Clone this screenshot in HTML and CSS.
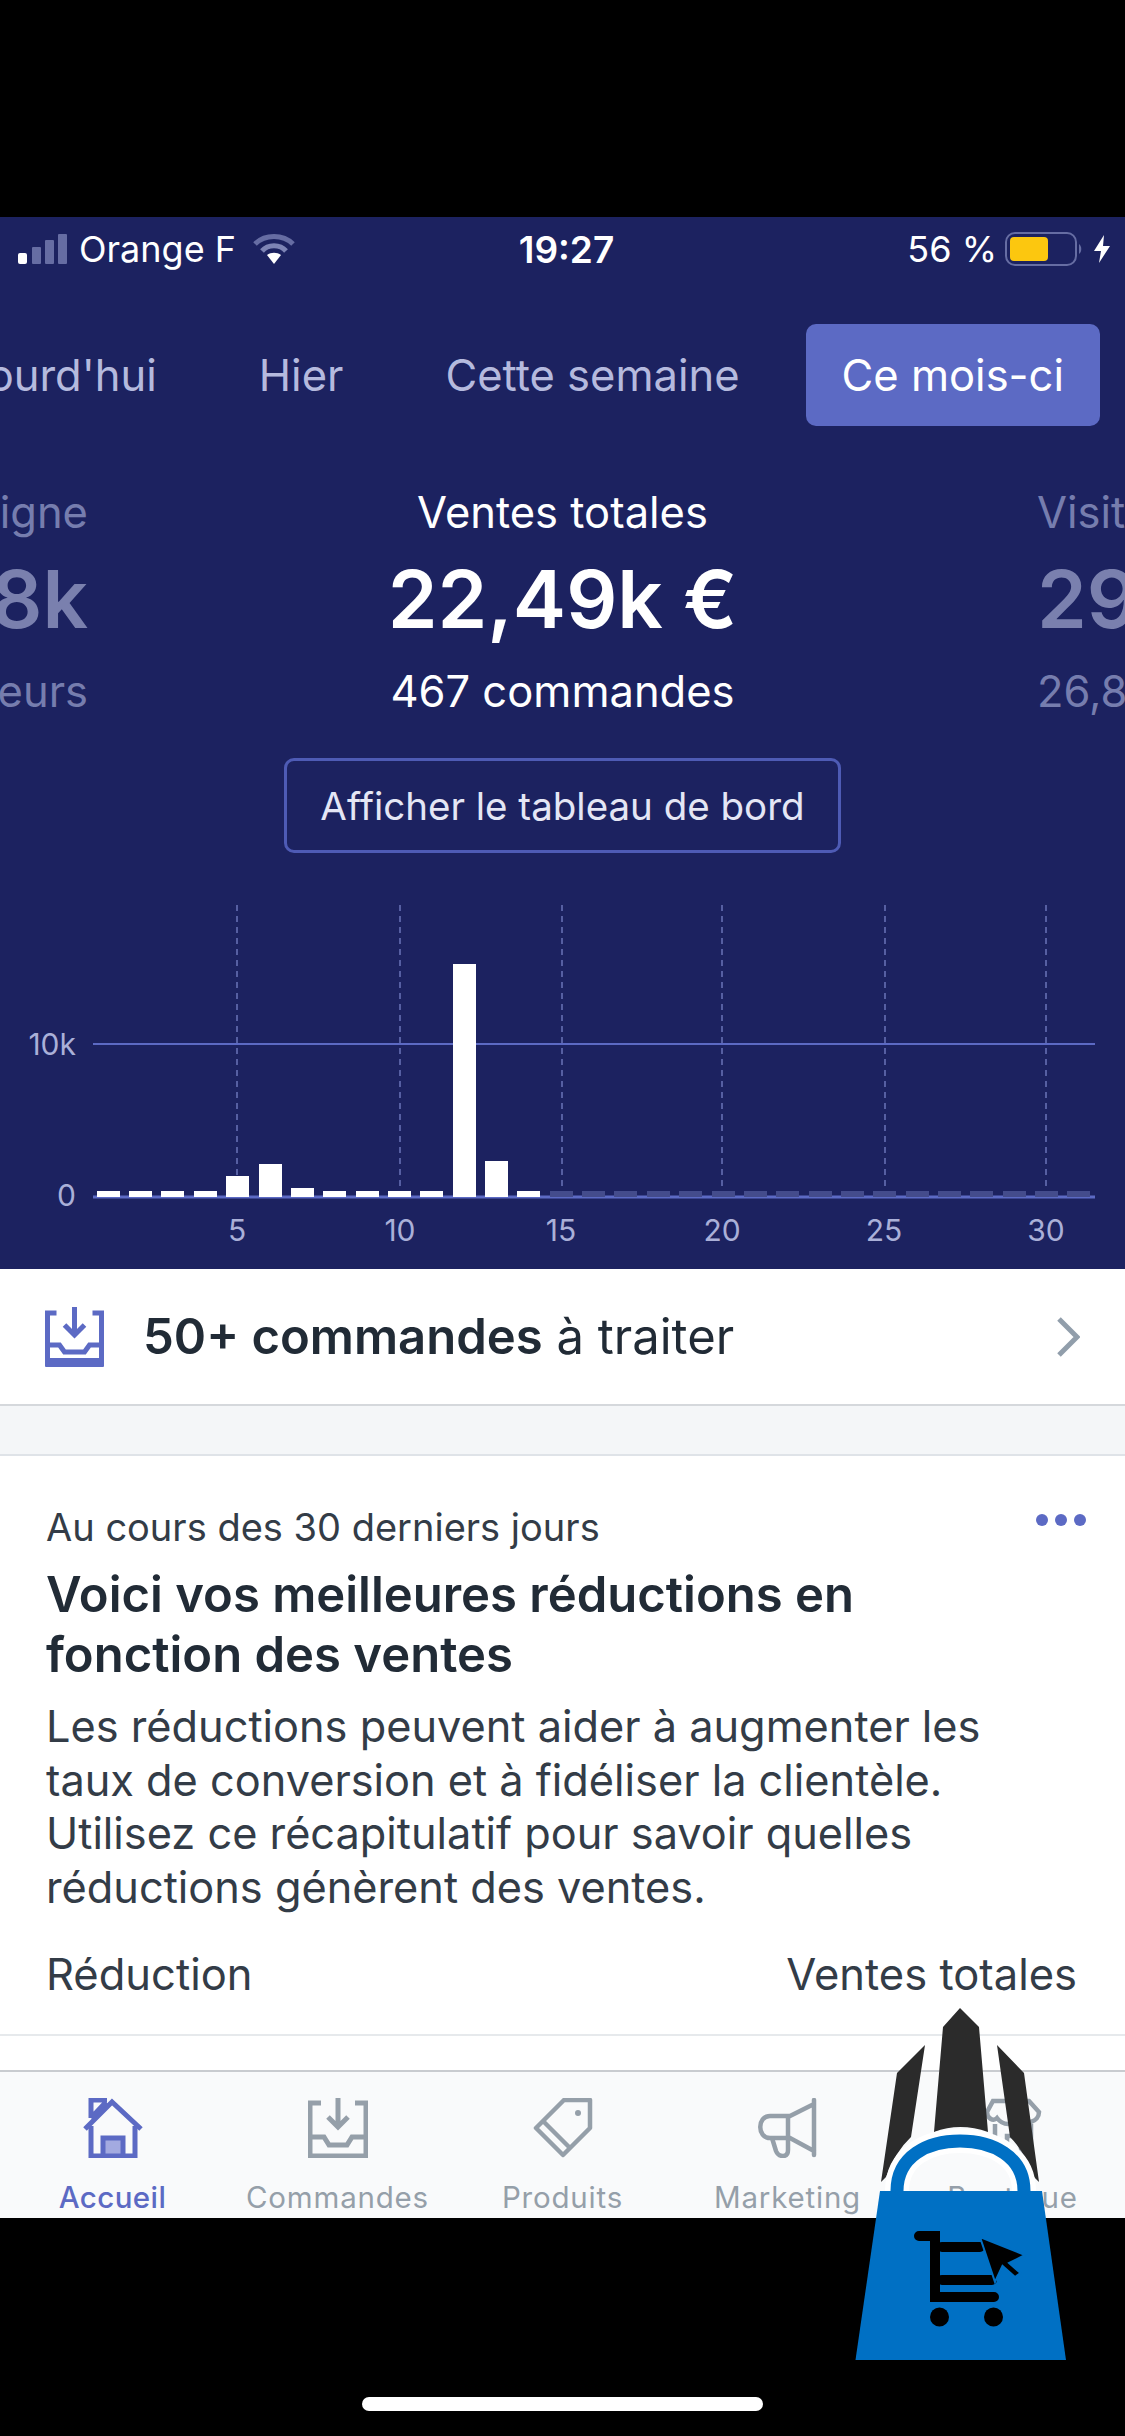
FILE: index.html
```html
<!DOCTYPE html>
<html lang="fr">

<head>
    <meta charset="utf-8">
    <meta name="viewport" content="width=device-width, initial-scale=1.0">
    <title>Accueil</title>
    <link rel="stylesheet" href="styles.css">
</head>

<body>
    <div class="shot">
        <div class="black-top"></div>

        <div class="screen">
            <section class="dark">
                <div class="status">
                    <div class="status-left">
                        <svg class="signal" viewBox="0 0 50 30" width="50" height="30">
                            <rect x="0" y="19" width="9" height="11" rx="2" fill="#fff" />
                            <rect x="14" y="13" width="9" height="17" rx="1" fill="#666da3" />
                            <rect x="27" y="6" width="9" height="24" rx="1" fill="#666da3" />
                            <rect x="40" y="0" width="9" height="30" rx="1" fill="#666da3" />
                        </svg>
                        <span>Orange F</span>
                        <svg class="wifi" viewBox="0 0 42 30" width="42" height="30">
                            <path d="M2 10 C12 0 30 0 40 10" fill="none" stroke="#666da3" stroke-width="5" />
                            <path d="M9 17 C15 10 27 10 33 17" fill="none" stroke="#7d84b5" stroke-width="5" />
                            <path d="M14 21 C18 18 24 18 28 21 L21 30 Z" fill="#fff" />
                        </svg>
                    </div>
                    <div class="status-time">19:27</div>
                    <div class="status-right">
                        <span class="status-pct">56 %</span>
                        <svg class="battery" viewBox="0 0 78 34" width="78" height="34">
                            <rect x="1" y="1" width="70" height="32" rx="9" fill="none" stroke="#666da3" stroke-width="2" />
                            <rect x="5" y="5" width="38" height="24" rx="4" fill="#fcc70f" />
                            <path d="M74 12 C77 14 77 20 74 22 Z" fill="#666da3" />
                        </svg>
                        <svg class="bolt" viewBox="0 0 16 28" width="16" height="28">
                            <path d="M10 0 L0 16 L7 16 L5 28 L16 11 L9 11 Z" fill="#fff" />
                        </svg>
                    </div>
                </div>

                <nav class="tabs">
                    <a class="tab">Aujourd'hui</a>
                    <a class="tab">Hier</a>
                    <a class="tab">Cette semaine</a>
                    <a class="tab tab-active">Ce mois-ci</a>
                </nav>

                <div class="metrics">
                    <div class="metric metric-left">
                        <div class="metric-title">En ligne</div>
                        <div class="metric-value">1,8k</div>
                        <div class="metric-sub">visiteurs</div>
                    </div>
                    <div class="metric metric-main">
                        <div class="metric-title">Ventes totales</div>
                        <div class="metric-value">22,49k €</div>
                        <div class="metric-sub">467 commandes</div>
                    </div>
                    <div class="metric metric-right">
                        <div class="metric-title">Visites</div>
                        <div class="metric-value">29,8k</div>
                        <div class="metric-sub">26,8k visiteurs</div>
                    </div>
                </div>

                <div class="dashboard-row">
                    <a class="dashboard-btn">Afficher le tableau de bord</a>
                </div>

                <svg class="chart" viewBox="0 880 1125 389" width="1125" height="389">
                    <g class="chart-dash">
                        <line x1="237" y1="905" x2="237" y2="1197" />
                        <line x1="400" y1="905" x2="400" y2="1197" />
                        <line x1="562" y1="905" x2="562" y2="1197" />
                        <line x1="722" y1="905" x2="722" y2="1197" />
                        <line x1="885" y1="905" x2="885" y2="1197" />
                        <line x1="1046" y1="905" x2="1046" y2="1197" />
                    </g>
                    <line class="chart-line" x1="93" y1="1044" x2="1095" y2="1044" />
                    <line class="chart-base" x1="93" y1="1197" x2="1095" y2="1197" />

                    <g class="bars">
                        <rect x="97" y="1191" width="23" height="6" />
                        <rect x="129" y="1191" width="23" height="6" />
                        <rect x="161" y="1191" width="23" height="6" />
                        <rect x="194" y="1191" width="23" height="6" />
                        <rect x="226" y="1176" width="23" height="21" />
                        <rect x="259" y="1164" width="23" height="33" />
                        <rect x="291" y="1188" width="23" height="9" />
                        <rect x="323" y="1191" width="23" height="6" />
                        <rect x="356" y="1191" width="23" height="6" />
                        <rect x="388" y="1191" width="23" height="6" />
                        <rect x="420" y="1191" width="23" height="6" />
                        <rect x="453" y="964" width="23" height="233" />
                        <rect x="485" y="1161" width="23" height="36" />
                        <rect x="517" y="1191" width="23" height="6" />
                    </g>
                    <g class="bars-future">
                        <rect x="550" y="1191" width="23" height="6" />
                        <rect x="582" y="1191" width="23" height="6" />
                        <rect x="614" y="1191" width="23" height="6" />
                        <rect x="647" y="1191" width="23" height="6" />
                        <rect x="679" y="1191" width="23" height="6" />
                        <rect x="712" y="1191" width="23" height="6" />
                        <rect x="744" y="1191" width="23" height="6" />
                        <rect x="776" y="1191" width="23" height="6" />
                        <rect x="809" y="1191" width="23" height="6" />
                        <rect x="841" y="1191" width="23" height="6" />
                        <rect x="873" y="1191" width="23" height="6" />
                        <rect x="906" y="1191" width="23" height="6" />
                        <rect x="938" y="1191" width="23" height="6" />
                        <rect x="970" y="1191" width="23" height="6" />
                        <rect x="1003" y="1191" width="23" height="6" />
                        <rect x="1035" y="1191" width="23" height="6" />
                        <rect x="1067" y="1191" width="23" height="6" />
                    </g>

                    <text class="chart-y" x="76" y="1055">10k</text>
                    <text class="chart-y" x="76" y="1206">0</text>
                    <text class="chart-x" x="237" y="1241">5</text>
                    <text class="chart-x" x="400" y="1241">10</text>
                    <text class="chart-x" x="561" y="1241">15</text>
                    <text class="chart-x" x="722" y="1241">20</text>
                    <text class="chart-x" x="884" y="1241">25</text>
                    <text class="chart-x" x="1046" y="1241">30</text>
                </svg>
            </section>

            <a class="todo">
                <svg class="todo-icon" viewBox="0 0 60 60" width="61" height="60">
                    <path d="M12 6 H3 V57 H57 V6 H48" fill="none" stroke="#5c6ac4" stroke-width="5" />
                    <path d="M3 38 H15 L20 45 H40 L45 38 H57" fill="none" stroke="#5c6ac4" stroke-width="5" />
                    <rect x="1" y="51" width="58" height="9" fill="#5c6ac4" />
                    <path d="M30 0 V26 M20 18 L30 28 L40 18" fill="none" stroke="#5c6ac4" stroke-width="5" />
                </svg>
                <span class="todo-text"><b>50+ commandes</b> à traiter</span>
                <svg class="chevron" viewBox="0 0 24 40" width="24" height="40">
                    <path d="M3 2 L21 20 L3 38" fill="none" stroke="#919eab" stroke-width="5" />
                </svg>
            </a>

            <div class="gap"></div>

            <section class="card">
                <div class="card-top">
                    <p class="card-kicker">Au cours des 30 derniers jours</p>
                    <div class="dots"><i></i><i></i><i></i></div>
                </div>
                <h2 class="card-title">Voici vos meilleures réductions en fonction des ventes</h2>
                <p class="card-body">Les réductions peuvent aider à augmenter les taux de conversion et à fidéliser la clientèle. Utilisez ce récapitulatif pour savoir quelles réductions génèrent des ventes.</p>
                <div class="card-head">
                    <span>Réduction</span>
                    <span>Ventes totales</span>
                </div>
            </section>

            <div class="card-rest"></div>

            <nav class="tabbar">
                <a class="tabbar-item tabbar-active">
                    <svg viewBox="0 0 60 60" width="60" height="60">
                        <path d="M2 31 L29 4 L58 31" fill="none" stroke="#5c6ac4" stroke-width="5" />
                        <path d="M8 28 V58 H52 V28" fill="none" stroke="#5c6ac4" stroke-width="5" />
                        <path d="M8 20 V2 H24 M8 20 L23 4" fill="none" stroke="#5c6ac4" stroke-width="5" />
                        <rect x="20" y="40" width="20" height="18" fill="#a3aae0" stroke="#5c6ac4" stroke-width="5" />
                    </svg>
                    <span>Accueil</span>
                </a>
                <a class="tabbar-item">
                    <svg viewBox="0 0 60 60" width="60" height="60">
                        <path d="M13 5 H2 V58 H58 V5 H47" fill="none" stroke="#959fa9" stroke-width="5" />
                        <path d="M2 39 H16 L21 47 H39 L44 39 H58" fill="none" stroke="#959fa9" stroke-width="5" />
                        <path d="M30 0 V28 M20 19 L30 29 L40 19" fill="none" stroke="#959fa9" stroke-width="5" />
                    </svg>
                    <span>Commandes</span>
                </a>
                <a class="tabbar-item">
                    <svg viewBox="0 0 60 60" width="60" height="60">
                        <path d="M31 2 H57 V30 L30 57 L3 30 Z" fill="none" stroke="#959fa9" stroke-width="4.5" stroke-linejoin="round" />
                        <path d="M10 23 L37 50" fill="none" stroke="#959fa9" stroke-width="4.5" />
                        <circle cx="45" cy="15" r="3" fill="#959fa9" />
                    </svg>
                    <span>Produits</span>
                </a>
                <a class="tabbar-item">
                    <svg viewBox="0 0 60 60" width="60" height="60">
                        <path d="M56 2 V57 M56 6 L32 18 H12 C-1 18 -1 40 12 40 H32 L56 53" fill="none" stroke="#959fa9" stroke-width="4.5" stroke-linecap="round" />
                        <path d="M30 18 V40" fill="none" stroke="#959fa9" stroke-width="4.5" />
                        <path d="M14 40 L18 53 Q20 58 25 58 Q30 58 30 52 V40" fill="none" stroke="#959fa9" stroke-width="4.5" />
                    </svg>
                    <span>Marketing</span>
                </a>
                <a class="tabbar-item">
                    <svg viewBox="0 0 60 60" width="60" height="60">
                        <path d="M10 3 H46 L56 14 C56 24 42 28 36 20 C30 28 20 28 14 20 C10 24 4 20 4 14 Z" fill="none" stroke="#959fa9" stroke-width="4.5" />
                        <path d="M12 26 V56 H48 V26 M24 56 V38 H38 V56" fill="none" stroke="#959fa9" stroke-width="4.5" />
                    </svg>
                    <span>Boutique</span>
                </a>
            </nav>
        </div>

        <div class="black-bottom">
            <div class="home-bar"></div>
        </div>

        <svg class="logo" viewBox="0 0 565 400" width="565" height="400">
            <path class="logo-spike" d="M400 28 L419 47 L428 152 Q400 142 374 152 L383 47 Z" />
            <path class="logo-spike" d="M365 65 L337 93 L321 202 L326 197 Q335 172 351 157 Z" />
            <path class="logo-spike" d="M437 65 L464 93 L479 202 L474 197 Q465 172 450 157 Z" />
            <path class="logo-halo" d="M337 211 C337 176 368 161 400 161 C432 161 464 176 464 211" />
            <path class="logo-handle" d="M337 211 C337 176 368 161 400 161 C432 161 464 176 464 211" />
            <path class="logo-bag" d="M320 211 H482 L506 380 H295.5 Z" />
            <path class="logo-cart" d="M359 256 H375 V317 H434 M382 267 H420 M382 300 H432" />
            <circle cx="379.5" cy="337" r="9.5" />
            <circle cx="433.5" cy="337" r="9.5" />
            <path class="logo-cursor" d="M420 257 L465 275 L449 283 L460.5 293 L455 297 L442.5 286 L435 302 Z" />
        </svg>
    </div>
</body>

</html>
```

FILE: styles.css
```css
* {
    box-sizing: border-box;
}

body {
    margin: 0;
    background: #000;
    font-family: Inter, "Noto Sans", "Liberation Sans", sans-serif;
}

.shot {
    position: relative;
    width: 1125px;
    height: 2436px;
    overflow: hidden;
    display: flex;
    flex-direction: column;
}

.black-top {
    height: 217px;
    flex: none;
}

.screen {
    height: 2001px;
    flex: none;
    display: flex;
    flex-direction: column;
    overflow: hidden;
    background: #fff;
}

.black-bottom {
    flex: 1;
    display: flex;
    justify-content: center;
    align-items: flex-end;
    padding-bottom: 25px;
}

.home-bar {
    width: 401px;
    height: 14px;
    border-radius: 7px;
    background: #fff;
}

/* dark header */
.dark {
    height: 1052px;
    flex: none;
    background: #1c2260;
    color: #fff;
    overflow: hidden;
}

.status {
    height: 64px;
    display: grid;
    grid-template-columns: 1fr auto 1fr;
    align-items: center;
    font-size: 36px;
}

.status-left {
    display: flex;
    align-items: center;
    padding-left: 18px;
    gap: 11px;
}

.wifi {
    margin-left: 6px;
}

.status-time {
    font-size: 37px;
    font-weight: 600;
    padding-left: 8px;
}

.status-right {
    display: flex;
    align-items: center;
    justify-content: flex-end;
    padding-right: 15px;
    gap: 11px;
}

.status-pct {
    margin-right: -3px;
}

.tabs {
    margin-top: 43px;
    display: flex;
    justify-content: flex-end;
    gap: 30px;
    padding-right: 25px;
}

.tab {
    flex: none;
    height: 102px;
    padding: 0 36px;
    border-radius: 10px;
    display: flex;
    align-items: center;
    font-size: 43.5px;
    color: #b5bade;
    white-space: nowrap;
}

.tab-active {
    background: #5c6ac4;
    color: #fff;
}

.metrics {
    margin-top: 61px;
    display: grid;
    grid-template-columns: 88px 1fr 88px;
}

.metric {
    display: flex;
    flex-direction: column;
    white-space: nowrap;
    color: #7a80ae;
}

.metric-left {
    align-items: flex-end;
}

.metric-main {
    align-items: center;
    color: #fff;
}

.metric-title,
.metric-sub {
    font-size: 43.5px;
    line-height: 50px;
}

.metric-value {
    margin-top: 12px;
    margin-bottom: 17px;
    font-size: 80px;
    line-height: 100px;
    font-weight: 600;
}

.metric-left .metric-title,
.metric-left .metric-sub,
.metric-right .metric-title,
.metric-right .metric-sub {
    color: #767dae;
}

.dashboard-row {
    margin-top: 42px;
    display: flex;
    justify-content: center;
}

.dashboard-btn {
    width: 557px;
    height: 95px;
    border: 3px solid #4e5bb5;
    border-radius: 10px;
    display: flex;
    align-items: center;
    justify-content: center;
    font-size: 38.5px;
    color: #e4e6f5;
}

/* chart */
.chart {
    display: block;
    margin-top: 27px;
}

.chart-dash line {
    stroke: #6a74b8;
    stroke-width: 1.5;
    stroke-dasharray: 6 5;
}

.chart-line {
    stroke: #5c6ac4;
    stroke-width: 2;
}

.chart-base {
    stroke: #5c6ac4;
    stroke-width: 3;
}

.bars rect {
    fill: #fff;
}

.bars-future rect {
    fill: #444c8c;
}

.chart-y,
.chart-x {
    font-size: 30px;
    fill: #aab0d8;
}

.chart-y {
    text-anchor: end;
}

.chart-x {
    text-anchor: middle;
}

/* orders row */
.todo {
    height: 137px;
    flex: none;
    display: flex;
    align-items: center;
    padding: 0 45px 0 44px;
    background: #fff;
    border-bottom: 2px solid #d5d8dc;
    color: #212b36;
}

.todo-text {
    flex: 1;
    margin-left: 38px;
    font-size: 49px;
}

.todo-text b {
    font-weight: 600;
}

.gap {
    height: 50px;
    flex: none;
    background: #f4f6f8;
    border-bottom: 2px solid #dfe3e8;
}

/* discounts card */
.card {
    flex: none;
    padding: 46px 48px 0 46px;
    color: #212b36;
    background: #fff;
}

.card-top {
    display: flex;
    justify-content: space-between;
    align-items: center;
}

.card-kicker {
    margin: 0;
    font-size: 38px;
    line-height: 50px;
    color: #333c47;
}

.dots {
    display: flex;
    gap: 7px;
    margin-top: -14px;
    margin-right: -9px;
}

.dots i {
    width: 12px;
    height: 12px;
    border-radius: 50%;
    background: #5c6ac4;
}

.card-title {
    margin: 13px 0 0;
    max-width: 900px;
    font-size: 49px;
    line-height: 60px;
    font-weight: 600;
}

.card-body {
    margin: 15px 0 0;
    max-width: 1000px;
    font-size: 43.3px;
    line-height: 53.5px;
    color: #333c47;
}

.card-head {
    margin-top: 33px;
    display: flex;
    justify-content: space-between;
    font-size: 43.5px;
    line-height: 54px;
    color: #333c47;
}

.card-rest {
    flex: 1;
    background: #fff;
    border-top: 2px solid #e6e9ec;
    margin-top: 33px;
}

/* bottom tabs */
.tabbar {
    height: 148px;
    flex: none;
    display: grid;
    grid-template-columns: repeat(5, 1fr);
    background: #f9fafb;
    border-top: 2px solid #c9ccd0;
}

.tabbar-item {
    display: flex;
    flex-direction: column;
    align-items: center;
    padding-top: 26px;
    font-size: 29.5px;
    letter-spacing: 0.8px;
    line-height: 36px;
    color: #959fa9;
    white-space: nowrap;
}

.tabbar-item span {
    margin-top: 21px;
}

.tabbar-active {
    color: #5c6ac4;
    font-weight: 500;
    letter-spacing: 0.4px;
}

/* overlay logo */
.logo {
    position: absolute;
    left: 560px;
    top: 1980px;
}

.logo-spike {
    fill: #2b2b2b;
}

.logo-halo,
.logo-handle {
    fill: none;
}

.logo-halo {
    stroke: #fff;
    stroke-width: 24;
}

.logo-handle {
    stroke: #0070c4;
    stroke-width: 13;
}

.logo-bag {
    fill: #0070c4;
}

.logo-cart {
    fill: none;
    stroke: #000;
    stroke-width: 10;
    stroke-linecap: round;
}

.logo-cursor {
    fill: #000;
    stroke: #0070c4;
    stroke-width: 2;
}
```
